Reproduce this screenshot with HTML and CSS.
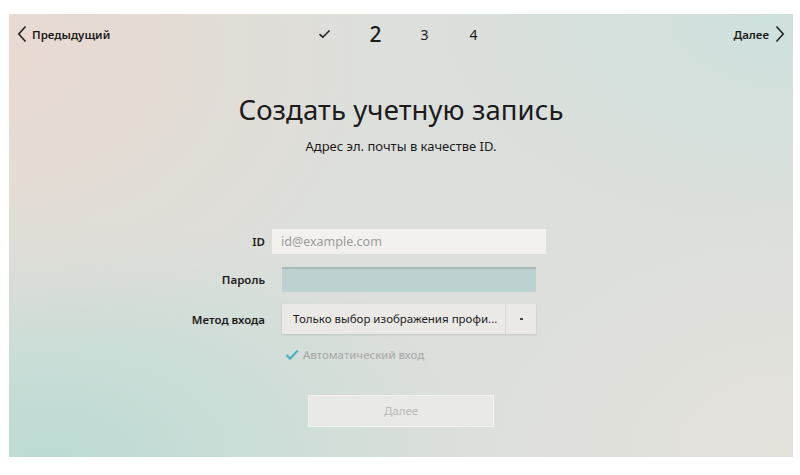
FILE: index.html
```html
<!DOCTYPE html>
<html lang="ru">
<head>
<meta charset="utf-8">
<link rel="stylesheet" href="styles.css">
</head>
<body>
<div class="screen">
  <div class="nav">
    <div class="nav-left">
      <svg class="chev" width="10" height="18" viewBox="0 0 10 18"><path d="M8.5 1.5 L1.8 9 L8.5 16.5" fill="none" stroke="#222" stroke-width="1.6"/></svg>
      <span>Предыдущий</span>
    </div>
    <div class="steps">
      <svg class="step-check" width="13" height="10" viewBox="0 0 13 10"><path d="M1.5 5.2 L4.8 8.2 L11.5 1.5" fill="none" stroke="#222" stroke-width="1.6"/></svg>
      <span class="step current">2</span>
      <span class="step">3</span>
      <span class="step">4</span>
    </div>
    <div class="nav-right">
      <span>Далее</span>
      <svg class="chev" width="10" height="18" viewBox="0 0 10 18"><path d="M1.5 1.5 L8.2 9 L1.5 16.5" fill="none" stroke="#222" stroke-width="1.6"/></svg>
    </div>
  </div>

  <h1 class="title">Создать учетную запись</h1>
  <p class="subtitle">Адрес эл. почты в качестве ID.</p>

  <div class="form">
    <div class="row row-id">
      <label class="label">ID</label>
      <div class="field field-id">id@example.com</div>
    </div>
    <div class="row row-pass">
      <label class="label">Пароль</label>
      <div class="field field-pass"></div>
    </div>
    <div class="row row-method">
      <label class="label">Метод входа</label>
      <div class="field field-select">
        <span class="select-text">Только выбор изображения профи...</span>
        <span class="select-arrow"><span class="dot"></span></span>
      </div>
    </div>
    <div class="row row-check">
      <span class="label"></span>
      <div class="check">
        <svg width="14" height="12" viewBox="0 0 14 12"><path d="M1.5 6 L5 9.8 L12.8 1.5" fill="none" stroke="#45b0c0" stroke-width="2"/></svg>
        <span>Автоматический вход</span>
      </div>
    </div>
  </div>

  <div class="btn">Далее</div>
</div>
</body>
</html>
```

FILE: styles.css
```css
html, body {
  margin: 0;
  padding: 0;
  background: #ffffff;
}
body {
  font-family: "Noto Sans", "Open Sans", sans-serif;
  color: #1b1b1b;
}
.screen {
  box-sizing: border-box;
  width: 784px;
  height: 443px;
  margin: 14px 0 0 9px;
  display: flex;
  flex-direction: column;
  background:
    radial-gradient(ellipse 380px 300px at 0% 10%, rgba(233, 217, 208, 0.95), rgba(233, 217, 208, 0) 100%),
    radial-gradient(ellipse 420px 240px at 5% 100%, rgba(186, 219, 211, 0.95), rgba(186, 219, 211, 0) 100%),
    radial-gradient(ellipse 360px 220px at 100% 0%, rgba(204, 225, 221, 0.9), rgba(204, 225, 221, 0) 100%),
    radial-gradient(ellipse 360px 260px at 100% 100%, rgba(229, 226, 219, 0.9), rgba(229, 226, 219, 0) 100%),
    #dcdfdb;
}
.nav {
  height: 40px;
  display: grid;
  grid-template-columns: 1fr auto 1fr;
  align-items: center;
  padding: 0 8px 0 8px;
  font-size: 11.5px;
  font-weight: 600;
}
.nav-left {
  display: flex;
  align-items: center;
  gap: 5px;
}
.nav-right {
  display: flex;
  align-items: center;
  justify-content: flex-end;
  gap: 6px;
}
.steps {
  display: flex;
  align-items: center;
  padding-right: 5px;
}
.step-check {
  margin-right: 39px;
}
.step {
  font-size: 14px;
  font-weight: 400;
  width: 12px;
  text-align: center;
  margin-right: 37px;
}
.step:last-child {
  margin-right: 0;
}
.step.current {
  font-size: 21px;
  font-weight: 500;
}
.title {
  margin: 36px 0 0 0;
  height: 40px;
  line-height: 40px;
  text-align: center;
  font-size: 27.5px;
  font-weight: 400;
  letter-spacing: 0.1px;
}
.subtitle {
  margin: 7px 0 0 0;
  height: 18px;
  line-height: 18px;
  text-align: center;
  font-size: 13px;
}
.form {
  margin: 74px 0 0 156px;
  display: flex;
  flex-direction: column;
}
.row {
  display: flex;
  align-items: center;
}
.label {
  width: 100px;
  flex: none;
  text-align: right;
  font-size: 11.5px;
  font-weight: 600;
  margin-right: 17px;
}
.field {
  box-sizing: border-box;
  width: 254px;
}
.row-id .field-id {
  width: 274px;
  margin-left: -10px;
  height: 25px;
  background: #f3f1ee;
  color: #9b9b9b;
  font-size: 12.5px;
  line-height: 25px;
  padding-left: 9px;
}
.row-pass {
  margin-top: 13px;
}
.field-pass {
  height: 25px;
  background: #bed1d1;
  border-top: 2px solid #a5b9b9;
}
.row-method {
  margin-top: 12px;
}
.field-select {
  height: 30px;
  display: flex;
  align-items: stretch;
  background: #ebe9e6;
  box-shadow: 0 1px 2px rgba(0, 0, 0, 0.12);
  font-size: 11.5px;
}
.select-text {
  flex: 1;
  line-height: 30px;
  padding-left: 11px;
  color: #1c1c1c;
  border-right: 1px solid #d9d7d4;
}
.select-arrow {
  width: 30px;
  display: flex;
  align-items: center;
  justify-content: center;
}
.dot {
  width: 3px;
  height: 2px;
  background: #444;
}
.row-check {
  margin-top: 13px;
}
.check {
  display: flex;
  align-items: center;
  gap: 4px;
  margin-left: 3px;
  font-size: 11.5px;
  color: #a6a6a6;
}
.btn {
  box-sizing: border-box;
  margin: 33px auto 0 auto;
  width: 186px;
  height: 32px;
  line-height: 30px;
  text-align: center;
  background: #e9e9e7;
  border: 1px solid #f2f2f0;
  color: #b8b8b8;
  font-size: 11.5px;
}
```
